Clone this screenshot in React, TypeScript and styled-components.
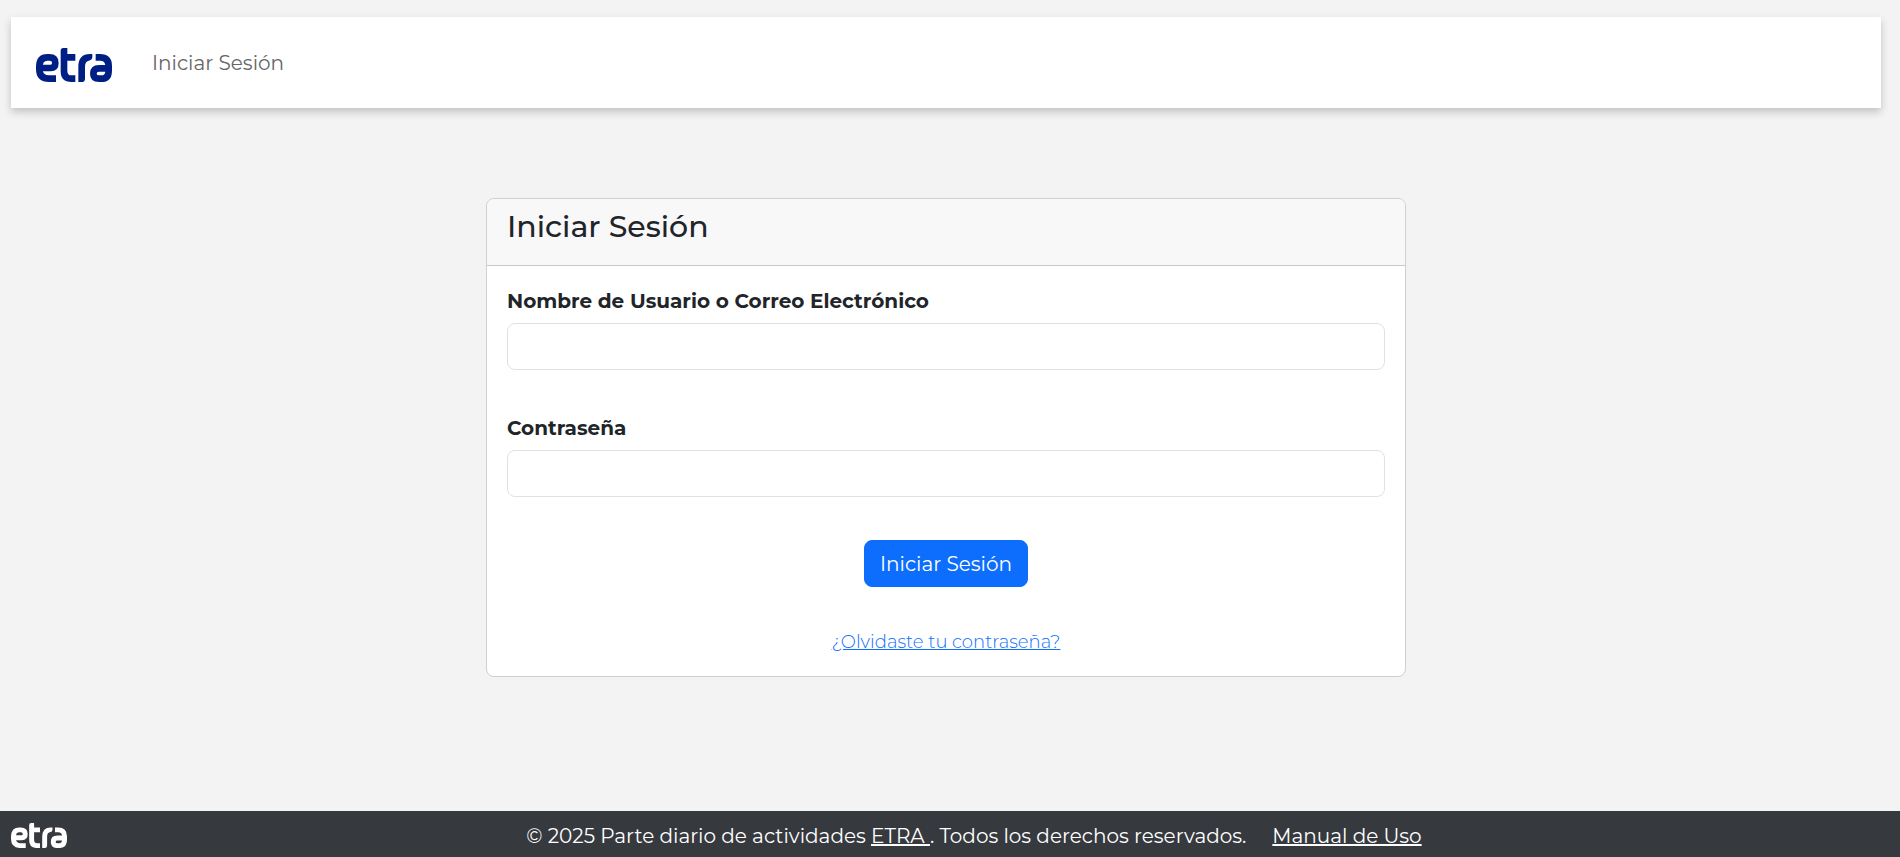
import React from 'react';
import styled, { createGlobalStyle } from 'styled-components';

const GlobalStyle = createGlobalStyle`
  *, *::before, *::after {
    box-sizing: border-box;
  }
  body {
    margin: 0;
    background: #f3f3f3;
    color: #212529;
    font-family: Montserrat, Inter, "Open Sans", sans-serif;
    font-size: 20px;
    line-height: 30px;
  }
`;

const Page = styled.div`
  display: flex;
  flex-direction: column;
  min-height: 100vh;
`;

const Navbar = styled.nav`
  display: flex;
  align-items: center;
  gap: 40px;
  height: 91px;
  margin: 17px 19px 0 11px;
  padding: 0 25px;
  background: #fff;
  box-shadow: 0 4px 8px rgba(0, 0, 0, 0.2);
`;

const LogoLink = styled.a`
  display: flex;
  padding-top: 5px;
  color: #001f85;
`;

const LogoSvg = styled.svg<{ $width: number }>`
  display: block;
  width: ${({ $width }) => $width}px;
  height: auto;
`;

const NavLink = styled.a`
  color: #666;
  font-weight: 400;
  text-decoration: none;
`;

const Main = styled.main`
  display: flex;
  flex: 1;
  align-items: flex-start;
  justify-content: center;
  padding: 90px 24px 40px 16px;
`;

const Card = styled.section`
  width: 100%;
  max-width: 920px;
  overflow: hidden;
  background: #fff;
  border: 1px solid #cfcfcf;
  border-radius: 8px;
`;

const CardHeader = styled.header`
  height: 67px;
  padding: 10px 20px;
  background: #f8f8f8;
  border-bottom: 1px solid #c9c9c9;
`;

const CardTitle = styled.h1`
  margin: 0;
  font-size: 30px;
  font-weight: 500;
  line-height: 36px;
`;

const Form = styled.form`
  display: flex;
  flex-direction: column;
  align-items: center;
  padding: 20px 20px 19px;
`;

const Field = styled.div`
  display: flex;
  flex-direction: column;
  gap: 7px;
  width: 100%;
  margin-bottom: 43px;
`;

const Label = styled.label`
  font-weight: 700;
`;

const Input = styled.input`
  width: 100%;
  height: 47px;
  padding: 8px 16px;
  color: inherit;
  font: inherit;
  background: #fff;
  border: 1px solid #dee2e6;
  border-radius: 8px;
`;

const SubmitButton = styled.button`
  height: 47px;
  padding: 0 15px;
  color: #fff;
  font: inherit;
  background: #0d6efd;
  border: 1px solid #0d6efd;
  border-radius: 8px;
`;

const ForgotLink = styled.a`
  margin-top: 40px;
  color: #0d6efd;
  font-size: 18px;
  font-weight: 300;
`;

const Footer = styled.footer`
  display: grid;
  grid-template-columns: 56px 1fr;
  align-items: center;
  height: 46px;
  padding: 3px 19px 0 11px;
  background: #36393e;
  color: #fff;
`;

const FooterText = styled.div`
  display: flex;
  justify-content: center;
  gap: 26px;
`;

const Copyright = styled.p`
  margin: 0;
`;

const FooterLink = styled.a`
  color: #fff;
  white-space: pre;
`;

const EtraLogo = ({ width }: { width: number }) => (
  <LogoSvg $width={width} viewBox="0 0 228 102" fill="none" stroke="currentColor" strokeWidth="20" role="img" aria-label="etra">
    <path d="M60 92H40Q10 92 10 64V56Q10 28 34 28H40Q58 28 58 45Q58 60 44 60H12" />
    <path d="M74 8Q74 0 82 0H94V18H118V38H94V68Q94 82 106 82H118V102H106Q74 102 74 70Z" fill="currentColor" stroke="none" />
    <path d="M127 102V56Q127 18 162 18H169V28Q167 38 158 38Q147 40 147 56V92Q147 102 137 102Z" fill="currentColor" stroke="none" />
    <path d="M179 28H192Q218 28 218 54V68Q218 92 196 92H189Q172 92 172 77Q172 61 189 61H218" />
  </LogoSvg>
);

export default function App() {
  return (
    <>
      <GlobalStyle />
      <Page>
        <Navbar>
          <LogoLink href="#inicio"><EtraLogo width={76} /></LogoLink>
          <NavLink href="#login">Iniciar Sesión</NavLink>
        </Navbar>
        <Main>
          <Card>
            <CardHeader>
              <CardTitle>Iniciar Sesión</CardTitle>
            </CardHeader>
            <Form onSubmit={(event) => event.preventDefault()}>
              <Field>
                <Label htmlFor="username">Nombre de Usuario o Correo Electrónico</Label>
                <Input id="username" type="text" />
              </Field>
              <Field>
                <Label htmlFor="password">Contraseña</Label>
                <Input id="password" type="password" />
              </Field>
              <SubmitButton type="submit">Iniciar Sesión</SubmitButton>
              <ForgotLink href="#recuperar">¿Olvidaste tu contraseña?</ForgotLink>
            </Form>
          </Card>
        </Main>
        <Footer>
          <EtraLogo width={56} />
          <FooterText>
            <Copyright>
              © 2025 Parte diario de actividades <FooterLink href="#etra">{'ETRA '}</FooterLink>. Todos los derechos reservados.
            </Copyright>
            <FooterLink href="#manual">Manual de Uso</FooterLink>
          </FooterText>
        </Footer>
      </Page>
    </>
  );
}
